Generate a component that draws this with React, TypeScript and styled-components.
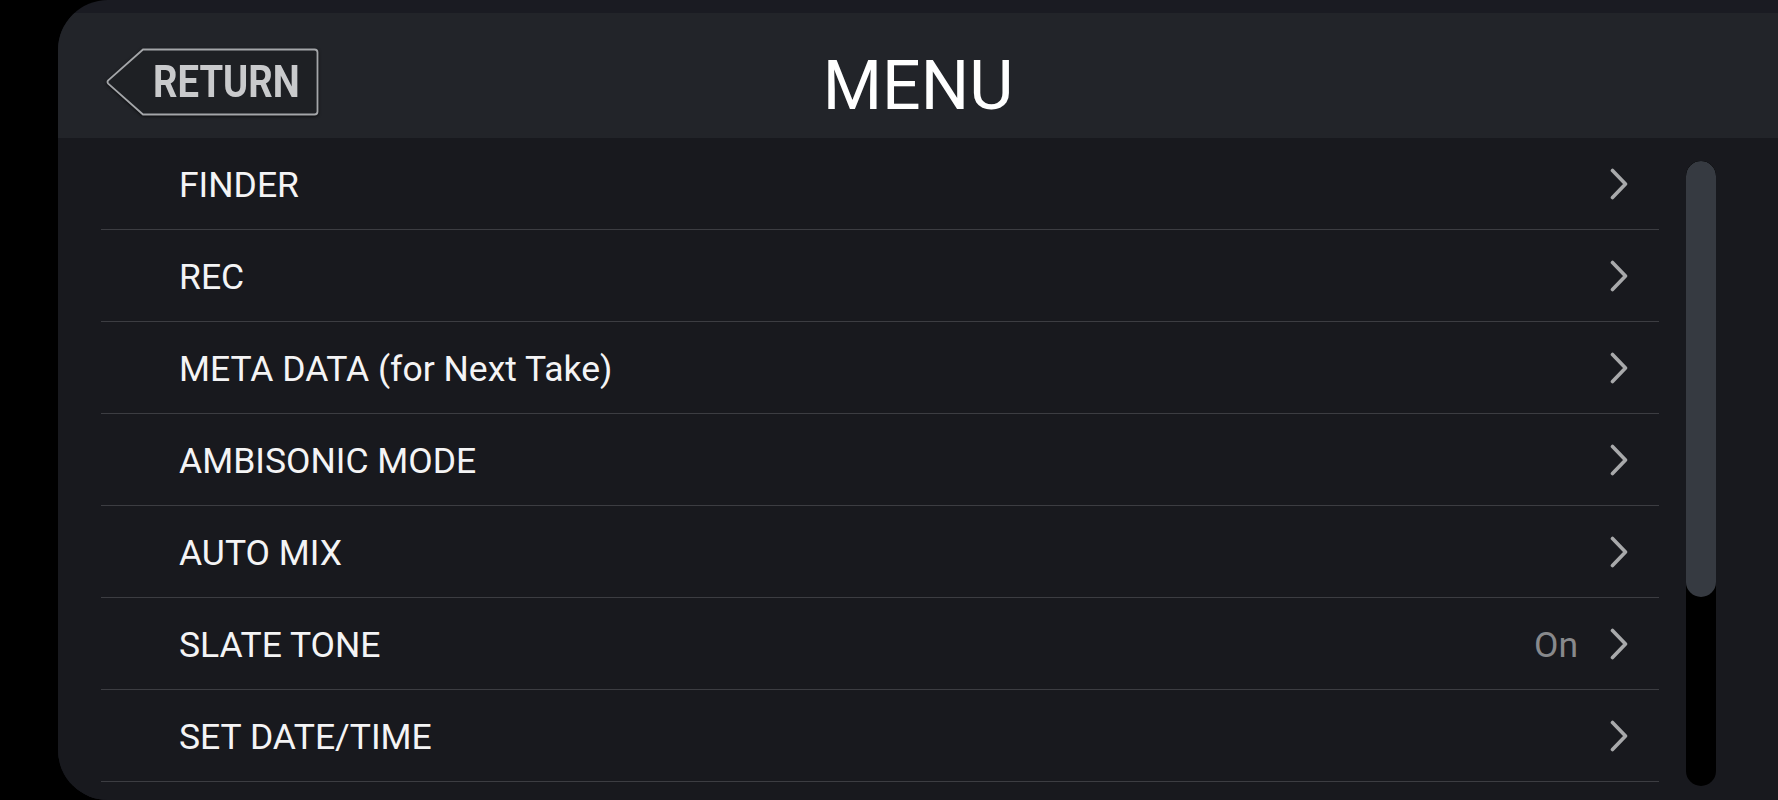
import React from "react";
import styled, { createGlobalStyle } from "styled-components";

const Global = createGlobalStyle`
  html, body { margin: 0; padding: 0; background: #000; }
  body { font-family: Roboto, "Noto Sans", sans-serif; }
  * { box-sizing: border-box; }
`;

const Screen = styled.div`
  display: flex;
  height: 800px;
  width: 1778px;
  background: #000;
  padding-left: 58px;
  overflow: hidden;
`;

const Panel = styled.div`
  flex: 1;
  display: flex;
  flex-direction: column;
  background: #1a1b22;
  border-radius: 50px 0 0 50px;
  overflow: hidden;
  padding-top: 13px;
`;

const Header = styled.header`
  height: 125px;
  flex: none;
  background: #222429;
  display: grid;
  grid-template-columns: 1fr auto 1fr;
  align-items: center;
`;

const HeaderLeft = styled.div`
  padding-left: 48px;
  padding-top: 12px;
  display: flex;
  align-items: center;
`;

const Title = styled.h1`
  margin: 0;
  padding-top: 20px;
  font-family: Roboto, sans-serif;
  font-weight: 400;
  font-size: 68px;
  line-height: 1;
  color: #ffffff;
  letter-spacing: 0;
`;

const ReturnButton = styled.button`
  position: relative;
  width: 213px;
  height: 68px;
  padding: 0 0 0 47px;
  border: none;
  background: transparent;
  display: flex;
  align-items: center;
  cursor: pointer;
`;

const ReturnShape = styled.svg`
  position: absolute;
  inset: 0;
  filter: drop-shadow(0 1px 1.5px rgba(0, 0, 0, 0.7));
`;

const ReturnLabel = styled.span`
  position: relative;
  display: inline-block;
  font-family: Roboto, sans-serif;
  font-weight: 700;
  font-size: 45px;
  line-height: 1;
  color: #c9cacc;
  transform: scaleX(0.85);
  transform-origin: left center;
  white-space: nowrap;
`;

const Body = styled.div`
  flex: 1;
  display: flex;
  padding-left: 43px;
  background: #18191e;
  min-height: 0;
`;

const List = styled.ul`
  flex: 1;
  margin: 0;
  padding: 0;
  list-style: none;
`;

const Row = styled.li`
  height: 92px;
  display: flex;
  align-items: center;
  padding: 3px 31px 0 78px;
  border-bottom: 1px solid #3c3d42;
`;

const Label = styled.span`
  flex: 1;
  font-family: Roboto, sans-serif;
  font-size: 35.5px;
  color: #f4f4f5;
  white-space: nowrap;
`;

const Value = styled.span`
  font-family: Roboto, sans-serif;
  font-size: 35.5px;
  color: #88898c;
  margin-right: 32px;
`;

const Chevron = styled.svg`
  width: 18px;
  height: 32px;
  flex: none;
  margin-top: -3px;
`;

const ScrollColumn = styled.div`
  width: 30px;
  margin: 23px 62px 14px 27px;
  flex: none;
`;

const Track = styled.div`
  height: 625px;
  background: #000;
  border-radius: 15px;
  overflow: hidden;
`;

const Thumb = styled.div`
  height: 436px;
  background: #363a41;
  border-radius: 15px;
`;

const items: { label: string; value?: string }[] = [
  { label: "FINDER" },
  { label: "REC" },
  { label: "META DATA (for Next Take)" },
  { label: "AMBISONIC MODE" },
  { label: "AUTO MIX" },
  { label: "SLATE TONE", value: "On" },
  { label: "SET DATE/TIME" },
];

export default function App() {
  return (
    <>
      <Global />
      <Screen>
        <Panel>
          <Header>
            <HeaderLeft>
              <ReturnButton>
                <ReturnShape viewBox="0 0 213 68" width="213" height="68">
                  <path
                    d="M37 1.5 H208.5 Q211.5 1.5 211.5 4.5 V63.5 Q211.5 66.5 208.5 66.5 H37 L2.2 35.6 Q0.8 34 2.2 32.4 Z"
                    fill="#1e2024"
                    stroke="#a4a6a9"
                    strokeWidth="1.8"
                  />
                </ReturnShape>
                <ReturnLabel>RETURN</ReturnLabel>
              </ReturnButton>
            </HeaderLeft>
            <Title>MENU</Title>
            <div />
          </Header>
          <Body>
            <List>
              {items.map((it) => (
                <Row key={it.label}>
                  <Label>{it.label}</Label>
                  {it.value && <Value>{it.value}</Value>}
                  <Chevron viewBox="0 0 18 32">
                    <path
                      d="M2.5 2.5 L15.5 16 L2.5 29.5"
                      fill="none"
                      stroke="#a8a9ab"
                      strokeWidth="3.6"
                      strokeLinecap="round"
                      strokeLinejoin="round"
                    />
                  </Chevron>
                </Row>
              ))}
            </List>
            <ScrollColumn>
              <Track>
                <Thumb />
              </Track>
            </ScrollColumn>
          </Body>
        </Panel>
      </Screen>
    </>
  );
}
